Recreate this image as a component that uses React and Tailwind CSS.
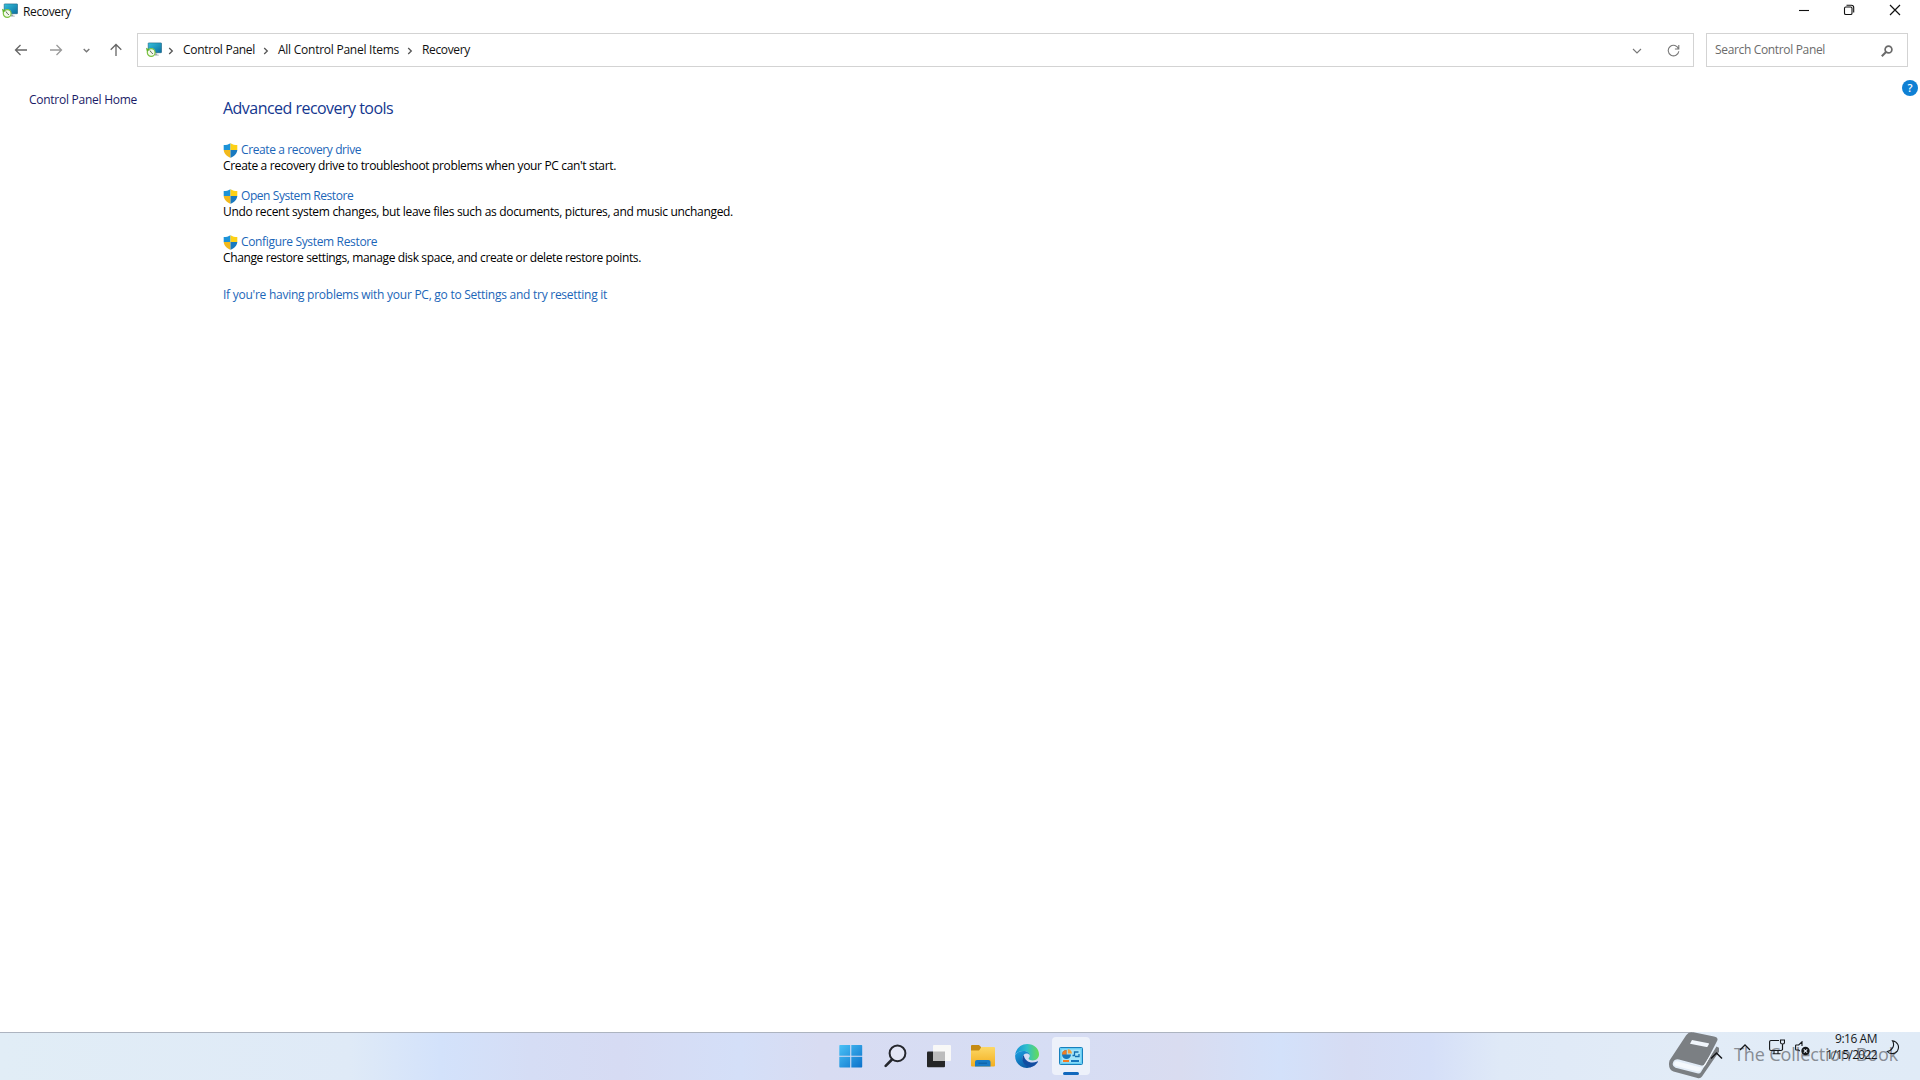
function RecoveryIcon() {
  return (
    <svg className="block h-4 w-4 shrink-0" viewBox="0 0 16 16">
      <defs>
        <linearGradient id="screen" x1="0" y1="0" x2="1" y2="1">
          <stop offset="0" stopColor="#35c1dc" />
          <stop offset="1" stopColor="#0b6d9f" />
        </linearGradient>
      </defs>
      <rect x="2.2" y="0.9" width="13.3" height="9.8" rx="0.4" fill="url(#screen)" stroke="#17607f" strokeWidth="0.6" />
      <path d="M9 11.400h2.200v1.300h1.600v.7H9z" fill="#9aa5ab" />
      <circle cx="5.200" cy="10.500" r="3.900" fill="#f4faec" stroke="#7cc243" strokeWidth="1.200" />
      <path d="M0 5.800 0.800 9.600 4 7.700z" fill="#5fb32e" />
      <path d="M4 8.500l1.300 2 1.600 1.300" stroke="#4b5a3d" strokeWidth="0.9" fill="none" />
    </svg>
  );
}

function Shield() {
  return (
    <svg className="block h-[15px] w-[15px] shrink-0" viewBox="0 0 15 15">
      <path d="M7.500.300C5.600 1.700 3 2 .700 2v4.900h6.800z" fill="#1c93d8" />
      <path d="M7.500.300C9.400 1.700 12 2 14.300 2v4.900H7.500z" fill="#fdd116" />
      <path d="M.700 6.900c.2 3.700 3.300 6.400 6.800 7.800V6.900z" fill="#f2b91c" />
      <path d="M14.300 6.900c-.2 3.700-3.300 6.400-6.800 7.800V6.900z" fill="#1879c0" />
    </svg>
  );
}

function Crumb() {
  return (
    <svg className="block h-2 w-[6px] shrink-0" viewBox="0 0 6 8" fill="none" stroke="#555" strokeWidth="1.3">
      <path d="M1.200 1 4.300 4 1.200 7" />
    </svg>
  );
}

function TitleBar() {
  return (
    <header className="flex h-6 items-start">
      <div className="flex pl-[2px] pt-[3px]">
        <RecoveryIcon />
        <span className="ml-[5px] mt-px text-xs tracking-[-0.35px]">Recovery</span>
      </div>
      <div className="ml-auto flex pr-[19px] pt-1">
        <svg className="mr-[33px] h-3 w-3" viewBox="0 0 12 12" stroke="#111" strokeWidth="1.1">
          <path d="M1 6.500h10" />
        </svg>
        <svg className="mr-[34px] h-3 w-3" viewBox="0 0 12 12" fill="none" stroke="#111" strokeWidth="1.100">
          <rect x="1.500" y="3" width="7.500" height="7.500" rx="1.300" />
          <path d="M3.500 1.300h4.900A2.300 2.300 0 0 1 10.700 3.600v4.900" />
        </svg>
        <svg className="h-3 w-3" viewBox="0 0 12 12" stroke="#111" strokeWidth="1.200">
          <path d="M1 1l10 10M11 1 1 11" />
        </svg>
      </div>
    </header>
  );
}

function Toolbar() {
  return (
    <nav className="mt-[9px] flex h-[34px] items-center pr-[12px] text-xs">
      <svg className="ml-[14px] h-[14px] w-[14px]" viewBox="0 0 14 14" fill="none" stroke="#666" strokeWidth="1.300">
        <path d="M13 7H1.500M6.500 2l-5 5 5 5" />
      </svg>
      <svg className="ml-[21px] h-[14px] w-[14px]" viewBox="0 0 14 14" fill="none" stroke="#999" strokeWidth="1.300">
        <path d="M1 7h11.500M7.500 2l5 5-5 5" />
      </svg>
      <svg className="ml-5 h-[5px] w-[7px]" viewBox="0 0 7 5" fill="none" stroke="#777" strokeWidth="1.400">
        <path d="M.7 1 3.500 3.700 6.300 1" />
      </svg>
      <svg className="ml-[19px] h-[14px] w-[14px]" viewBox="0 0 14 14" fill="none" stroke="#666" strokeWidth="1.300">
        <path d="M7 13V1.500M1.700 6.800 7 1.500l5.300 5.300" />
      </svg>
      <div className="ml-[14px] flex h-full flex-1 items-center border border-[#d3d3d3] pl-2">
        <div className="mb-px"><RecoveryIcon /></div>
        <div className="ml-[6px] mt-px"><Crumb /></div>
        <span className="ml-[9px] w-[72px] whitespace-nowrap tracking-[-0.28px]">Control Panel</span>
        <div className="ml-[8px] mt-px"><Crumb /></div>
        <span className="ml-[9px] w-[121px] whitespace-nowrap tracking-[-0.25px]">All Control Panel Items</span>
        <div className="ml-[8px] mt-px"><Crumb /></div>
        <span className="ml-[9px] tracking-[-0.35px]">Recovery</span>
        <svg className="ml-auto mr-[25px] mt-px h-[6px] w-[10px]" viewBox="0 0 10 6" fill="none" stroke="#777" strokeWidth="1.100">
          <path d="M1 1l4 4 4-4" />
        </svg>
        <svg className="mr-[13px] mt-px h-[13px] w-[13px]" viewBox="0 0 13 13" fill="none" stroke="#777" strokeWidth="1.100">
          <path d="M11.600 5A5.300 5.300 0 1 0 11.800 7.200M11.800 1v4H7.900" />
        </svg>
      </div>
      <div className="ml-3 flex h-full w-[202px] items-center border border-[#d3d3d3] pl-2 pr-[14px] text-[#6b6b6b]">
        <span className="tracking-[-0.34px]">Search Control Panel</span>
        <svg className="ml-auto mt-px h-3 w-3" viewBox="0 0 12 12" fill="none" stroke="#6a6a6a">
          <circle cx="7.500" cy="4.500" r="3.400" strokeWidth="1.700" />
          <path d="M5 7 .8 11.200" strokeWidth="2" />
        </svg>
      </div>
    </nav>
  );
}

function Tool({ link, desc }) {
  return (
    <section className="mb-[14px]">
      <div className="flex h-4 items-center gap-[3px] text-[#1b66b8]">
        <Shield />
        {link}
      </div>
      <p className="whitespace-nowrap text-black">{desc}</p>
    </section>
  );
}

function Content() {
  return (
    <main className="flex flex-1 text-xs leading-4">
      <aside className="w-[223px] shrink-0 pl-[29px] pt-[25px]">
        <span className="tracking-[-0.26px] text-[#1a1a66]">Control Panel Home</span>
      </aside>
      <div className="flex-1 pt-[30px]">
        <h1 className="mb-[23px] text-base leading-[22px] tracking-[-0.53px] text-[#14378f]">Advanced recovery tools</h1>
        <Tool
          link={<a className="tracking-[-0.39px]">Create a recovery drive</a>}
          desc={<span className="tracking-[-0.343px]">Create a recovery drive to troubleshoot problems when your PC can't start.</span>}
        />
        <Tool
          link={<a className="tracking-[-0.43px]">Open System Restore</a>}
          desc={<span className="tracking-[-0.314px]">Undo recent system changes, but leave files such as documents, pictures, and music unchanged.</span>}
        />
        <Tool
          link={<a className="tracking-[-0.34px]">Configure System Restore</a>}
          desc={<span className="tracking-[-0.382px]">Change restore settings, manage disk space, and create or delete restore points.</span>}
        />
        <a className="mt-[21px] block tracking-[-0.26px] text-[#1b66b8]">If you're having problems with your PC, go to Settings and try resetting it</a>
      </div>
      <div className="pr-[2px] pt-[13px]">
        <div className="flex h-4 w-4 items-center justify-center rounded-full bg-[#0f80d4] text-[11px] font-semibold text-white">?</div>
      </div>
    </main>
  );
}

function TaskbarIcons() {
  return (
    <div className="ml-[839px] flex h-[38px] items-center">
      <svg className="h-6 w-6" viewBox="0 0 24 24">
        <defs>
          <linearGradient id="win" x1="0" y1="0" x2="24" y2="24" gradientUnits="userSpaceOnUse">
            <stop offset="0" stopColor="#4cc4f8" />
            <stop offset="1" stopColor="#0a6fc9" />
          </linearGradient>
        </defs>
        <path d="M1 1h10.200v10.700H.300V1.700q0-.7.7-.7zM12.300 1H22.500q.7 0 .7.700v10H12.300zM.300 12.800h10.900v10.700H1q-.7 0-.7-.7zM12.300 12.800h10.900v10q0 .7-.7.7H12.300z" fill="url(#win)" />
      </svg>
      <svg className="ml-[21px] h-6 w-[23px]" viewBox="0 0 23 24" fill="none" stroke="#25272d">
        <circle cx="13.500" cy="9.300" r="7.900" fill="#e3e6f5" strokeWidth="2" />
        <path d="M8 15.500 1.700 21.900" strokeWidth="2.600" strokeLinecap="round" />
      </svg>
      <svg className="ml-5 h-6 w-6" viewBox="0 0 24 24">
        <rect x="0" y="7.500" width="18" height="15.700" rx="1" fill="#252627" />
        <rect x="6" y="1" width="18" height="16" rx="1" fill="#f8f8f7" />
        <path d="M6 7.500h12v9.500H7q-1 0-1-1z" fill="#bcbcbc" />
      </svg>
      <svg className="ml-5 h-6 w-6" viewBox="0 0 24 24">
        <defs>
          <linearGradient id="folder" x1="0" y1="0" x2="0" y2="1">
            <stop offset="0" stopColor="#fcd866" />
            <stop offset="1" stopColor="#f3ae20" />
          </linearGradient>
        </defs>
        <path d="M0 2q0-1 1-1h7l2 2v5H0z" fill="#c58a13" />
        <path d="M0 6.500h8L10.500 3H23q1 0 1 1v17.500q0 1-1 1H1q-1 0-1-1z" fill="url(#folder)" />
        <path d="M4 22.500V18q0-2 2-2h11.500q2 0 2 2v4.500z" fill="#187ac5" />
        <path d="M7.500 19.200h8.500" stroke="#0e62a5" strokeWidth="1.200" />
      </svg>
      <svg className="ml-5 h-6 w-6" viewBox="0 0 24 24">
        <defs>
          <linearGradient id="edgeTop" x1="0" y1="8" x2="24" y2="8" gradientUnits="userSpaceOnUse">
            <stop offset="0" stopColor="#1590d8" />
            <stop offset="0.500" stopColor="#2fc0cb" />
            <stop offset="1" stopColor="#66dc55" />
          </linearGradient>
          <linearGradient id="edgeSide" x1="0" y1="8" x2="10" y2="24" gradientUnits="userSpaceOnUse">
            <stop offset="0" stopColor="#1b9fe0" />
            <stop offset="1" stopColor="#0c59a4" />
          </linearGradient>
        </defs>
        <path d="M.200 11C.900 4.500 6 0 12.200 0 19 0 24 4.800 24 10.300c0 3.600-2.700 6.200-6.200 6.200-2.900 0-4.200-1-4.200-1.900 0-.7 1.200-1.200 1.200-3 0-2.300-2.600-4.600-6.300-4.600C4.500 7 1.500 8.500.200 11z" fill="url(#edgeTop)" />
        <path d="M.100 11.600C1.300 8.600 4.700 6.900 8.300 7c3.600 0 6.300 2 6.500 4.500-.7-1.300-2-1.900-3.200-1.900-2.400 0-4 1.900-4 4.600 0 4.800 5.400 9.300 10.100 8.400A12 12 0 0 1 .1 11.600z" fill="url(#edgeSide)" />
        <path d="M8.800 11c-3.400 3.800-.6 11.600 6.800 12.300 3-.6 5.600-2.500 7.300-5.200.3-.5-.2-.9-.7-.7-5.900 2.800-12.600.2-13.400-6.400z" fill="#124da0" />
      </svg>
      <div className="ml-[13px] flex h-[38px] w-[38px] flex-col items-center rounded bg-[#edf1fa] pt-[10px]">
        <svg className="h-[18px] w-6" viewBox="0 0 24 18">
          <rect x="0.500" y="0.500" width="23" height="17" rx="1" fill="#67cef3" stroke="#1780bd" />
          <rect x="2.500" y="2.500" width="19" height="13" fill="#a5e4f9" />
          <path d="M7.500 3a4.500 4.500 0 1 0 4.500 4.500H7.500z" fill="#1677bd" />
          <path d="M8.800 2.300A4.500 4.500 0 0 1 13 6.500H8.800z" fill="#f5a13b" />
          <path d="M3 7.500A4.500 4.500 0 0 1 7.500 3v4.500z" fill="#f17d22" />
          <path d="M13.500 8.500h2V5h4M16 9.500h4V7" stroke="#146fb1" strokeWidth="1.300" fill="none" />
          <path d="M4 14h6" stroke="#f17d22" strokeWidth="2" />
          <path d="M12 14h8" stroke="#1677bd" strokeWidth="2" />
        </svg>
        <div className="mt-[7px] h-[3px] w-4 rounded-full bg-[#1268bd]" />
      </div>
    </div>
  );
}

function Watermark() {
  return (
    <div className="pointer-events-none absolute right-0 top-0 flex h-12 w-[252px]">
      <svg className="h-12 w-[54px] shrink-0" viewBox="0 0 54 48">
        <path d="M25.500 0.300 46 4.500q4.500 1 3.300 4L37.500 31.500q-1.200 2.500-4 2L11 27.500q-4.500-.8-6 3-1.300 4 2.500 5.300L30 41.500q2 .4 3-1.500L48.500 14.500l2.500 1.200v4L34 44.500q-1.500 2.300-4.500 1.500L5.500 39.500Q-.500 37 1.500 28.500L18 3.500Q20.500-.500 25.500.3z" fill="#7b7f83" />
        <path d="M9 29.300 32 35.300q3.800.8 5.500-2.300L47 15.500 32.500 38.300q-1 1.700-3 1.200L8 34q-2.300-.8-1.900-2.700.5-2 2.900-2z" fill="#f5f9fd" />
        <path d="m24 8 16.500 3.300q.8.200.4 1l-1.300 2.200q-.4.7-1.200.5L22 11.700z" fill="#f0f5fb" />
      </svg>
      <svg className="-ml-[12px] mt-[19px] h-[9px] w-[13px] shrink-0" viewBox="0 0 13 9" fill="none" stroke="#16181b" strokeWidth="1.500">
        <path d="M1 7.500 6.500 2 12 7.500" />
      </svg>
      <span className="ml-[11px] mt-[9px] whitespace-nowrap text-lg leading-[26px] tracking-[-0.1px] text-[#878c94]">The Collection Book</span>
    </div>
  );
}

function Tray() {
  return (
    <div className="flex items-start pr-[20px] text-[#15171a]">
      <svg className="mr-[18px] mt-[12px] h-[7px] w-3" viewBox="0 0 12 7" fill="none" stroke="currentColor" strokeWidth="1.300">
        <path d="M1 6l5-5 5 5" />
      </svg>
      <svg className="mr-[10px] mt-[7px] h-4 w-4" viewBox="0 0 16 16" fill="none" stroke="currentColor" strokeWidth="1.100">
        <path d="M10 1.500H2Q.6 1.500.6 3v7q0 1.500 1.400 1.500h10q1.500 0 1.500-1.500V6M5 11.500v3M9 11.500v3M3.500 14.700h8" />
        <path d="M11.500 1h4v2.500q0 1.500-2 1.500t-2-1.500zM13.500 5v6" />
      </svg>
      <svg className="mr-[16px] mt-[9px] h-[15px] w-[15px]" viewBox="0 0 15 15" fill="none" stroke="currentColor" strokeWidth="1.100">
        <path d="M7 5V.8L3.700 4H1.200Q.6 4 .6 4.700v3.600q0 .7.600.7h2.500l1 1" />
        <circle cx="10.500" cy="10" r="4.200" fill="currentColor" stroke="none" />
        <path d="m8.800 8.300 3.400 3.400M12.200 8.300l-3.400 3.400" stroke="#e7eff8" />
      </svg>
      <div className="flex w-[51px] flex-col items-end whitespace-nowrap text-xs leading-4">
        <span className="-mt-px tracking-[-0.46px]">9:16 AM</span>
        <span className="tracking-[-0.65px]">1/15/2022</span>
      </div>
      <svg className="ml-[9px] mt-[8px] h-[15px] w-[14px]" viewBox="0 0 14 15" fill="none" stroke="currentColor" strokeWidth="1.100">
        <path d="M6.500.800C9 5 7 10 1.200 11.500c2.500 3 8 3 10.300-.8C13.800 6.500 12 2 6.500.800z" />
      </svg>
    </div>
  );
}

export default function App() {
  return (
    <div className="flex h-[1080px] w-[1920px] flex-col overflow-hidden bg-white font-['Open_Sans',sans-serif] text-[#111]">
      <TitleBar />
      <Toolbar />
      <Content />
      <footer className="relative flex h-12 bg-[linear-gradient(90deg,#e1edf6_0,#dfeaf7_350px,#d3e2fb_440px,#d5ddf5_530px,#d6dbf3_620px,#d4dff8_740px,#d8dcf2_820px,#d6ddf4_1060px,#d9dcf0_1180px,#d3e1fa_1280px,#d6dcf3_1350px,#d5dff8_1430px,#dfe9f7_1500px,#e2ecf7_1690px,#e0ebf7_1920px)]">
        <div className="absolute left-0 top-0 h-px w-[1692px] bg-[#adb4c0]" />
        <Watermark />
        <div className="relative flex w-full items-start">
          <div className="pt-[5px]">
            <TaskbarIcons />
          </div>
          <div className="ml-auto">
            <Tray />
          </div>
        </div>
      </footer>
    </div>
  );
}
